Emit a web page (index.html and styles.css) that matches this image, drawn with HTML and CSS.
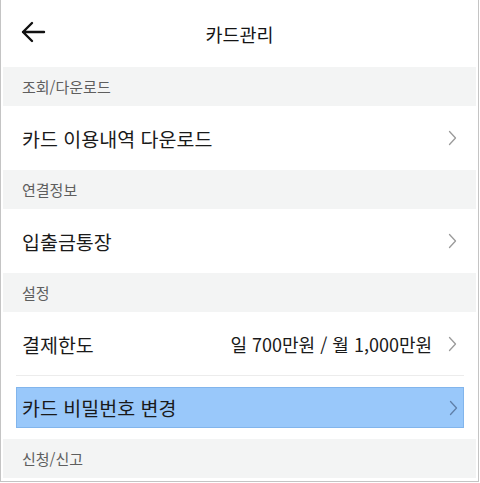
FILE: index.html
```html
<!DOCTYPE html>
<html lang="ko">
<head>
<meta charset="utf-8">
<link rel="stylesheet" href="styles.css">
</head>
<body>
<div class="screen">
  <header class="topbar">
    <span class="back">
      <svg width="26" height="22" viewBox="0 0 26 22"><path d="M24 11H3M12 2L3 11l9 9" fill="none" stroke="#111" stroke-width="2.4" stroke-linecap="round" stroke-linejoin="round"/></svg>
    </span>
    <h1 class="title">카드관리</h1>
  </header>

  <div class="section">조회/다운로드</div>
  <div class="row"><span class="label">카드 이용내역 다운로드</span><svg class="chev" width="9" height="16" viewBox="0 0 9 16"><path d="M1.5 1.5L7.5 8l-6 6.5"/></svg></div>

  <div class="section">연결정보</div>
  <div class="row"><span class="label">입출금통장</span><svg class="chev" width="9" height="16" viewBox="0 0 9 16"><path d="M1.5 1.5L7.5 8l-6 6.5"/></svg></div>

  <div class="section">설정</div>
  <div class="row row-divided"><span class="label">결제한도</span><span class="value">일 700만원 / 월 1,000만원</span><svg class="chev" width="9" height="16" viewBox="0 0 9 16"><path d="M1.5 1.5L7.5 8l-6 6.5"/></svg></div>
  <div class="row-wrap">
    <div class="row-selected"><span class="label">카드 비밀번호 변경</span><svg class="chev" width="9" height="16" viewBox="0 0 9 16"><path d="M1.5 1.5L7.5 8l-6 6.5"/></svg></div>
  </div>

  <div class="section">신청/신고</div>
</div>
</body>
</html>
```
FILE: styles.css
```css
html, body {
  margin: 0;
  padding: 0;
  background: #fff;
}
body {
  font-family: "Noto Sans CJK KR", "Noto Sans", sans-serif;
  color: #1e1e1e;
}
.screen {
  width: 473px;
  height: 481px;
  border-left: 1px solid #c4c4c4;
  border-right: 1px solid #c4c4c4;
  border-bottom: 1px solid #c4c4c4;
  padding: 0 2px;
  display: flex;
  flex-direction: column;
  overflow: hidden;
}
.topbar {
  height: 67px;
  flex: none;
  display: flex;
  align-items: center;
  justify-content: center;
  position: relative;
}
.back {
  position: absolute;
  left: 17px;
  top: 21px;
  display: flex;
}
.title {
  margin: 0;
  font-size: 18.5px;
  font-weight: 400;
  color: #141414;
}
.section {
  flex: none;
  height: 39px;
  background: #f3f4f4;
  display: flex;
  align-items: center;
  padding-left: 19px;
  font-size: 15px;
  color: #5e5e5e;
}
.row {
  flex: none;
  height: 64px;
  display: flex;
  align-items: center;
  padding: 0 19px;
  font-size: 19.5px;
}
.label {
  flex: 1;
  color: #1a1a1a;
}
.value {
  font-size: 18px;
  color: #1a1a1a;
  margin-right: 16px;
}
.chev {
  flex: none;
  fill: none;
  stroke: #9a9a9a;
  stroke-width: 1.3;
  stroke-linecap: round;
  stroke-linejoin: round;
}
.row-divided {
  position: relative;
}
.row-divided::after {
  content: "";
  position: absolute;
  left: 13px;
  right: 12px;
  bottom: 0;
  height: 1px;
  background: #ececec;
}
.row-wrap {
  flex: none;
  height: 63px;
  padding: 11px 12px 11px 13px;
  box-sizing: border-box;
  display: flex;
}
.row-selected {
  flex: 1;
  display: flex;
  align-items: center;
  background: #99c8fa;
  border: 1px solid #82b5ec;
  padding: 0 5px;
  font-size: 19.5px;
}
.row-selected .chev {
  stroke: #5f7fa8;
}
```
